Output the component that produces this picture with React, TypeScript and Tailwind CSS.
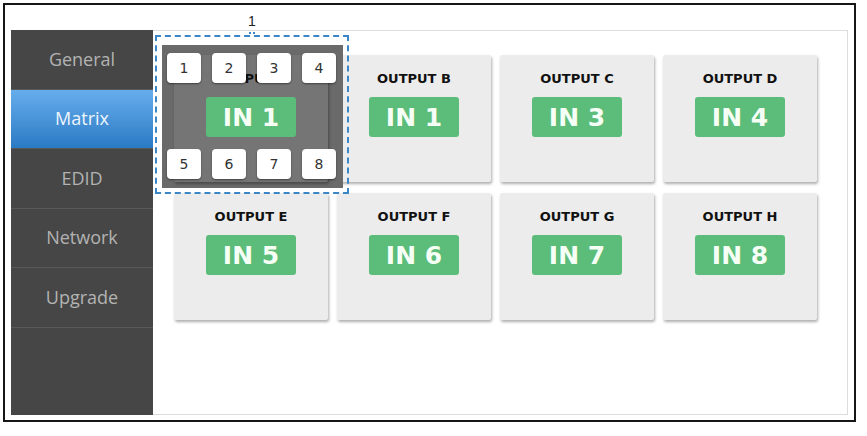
const NAV = ['General', 'Matrix', 'EDID', 'Network', 'Upgrade'];

const OUTPUTS = [
  { name: 'OUTPUT A', input: 'IN 1' },
  { name: 'OUTPUT B', input: 'IN 1' },
  { name: 'OUTPUT C', input: 'IN 3' },
  { name: 'OUTPUT D', input: 'IN 4' },
  { name: 'OUTPUT E', input: 'IN 5' },
  { name: 'OUTPUT F', input: 'IN 6' },
  { name: 'OUTPUT G', input: 'IN 7' },
  { name: 'OUTPUT H', input: 'IN 8' },
];

const verdana = "font-['DejaVu_Sans',Verdana,sans-serif]";

function InputButton({ n }: { n: number }) {
  return (
    <div
      className={`flex h-[30px] w-[34px] items-center justify-center rounded-[4px] bg-white text-[14px] text-[#333] shadow-[0_1px_2px_rgba(0,0,0,0.45)] ${verdana}`}
    >
      {n}
    </div>
  );
}

function OutputCard({ name, input, active }: { name: string; input: string; active?: boolean }) {
  return (
    <div
      className={`relative flex h-[127px] flex-col items-center rounded-[2px] pt-[16px] shadow-[1px_2px_3px_rgba(0,0,0,0.32)] ${
        active ? 'z-10 bg-[#757575]' : 'bg-[#ececec]'
      }`}
    >
      <p className={`text-[13px] leading-[16px] font-bold text-[#111] ${verdana}`}>{name}</p>
      <div
        className={`mt-[10px] flex h-[40px] w-[90px] items-center justify-center rounded-[3px] bg-[#5cbc79] text-[25px] leading-none font-bold text-[#f6fff6] ${verdana}`}
      >
        {input}
      </div>
    </div>
  );
}

export default function App() {
  return (
    <div className="h-[436px] w-[867px] bg-white pt-[3px] pl-[3px]">
      <div className="flex h-[419px] w-[853px] border-2 border-[#161616] pt-[25px] pr-[6px] pb-[5px] pl-[6px]">
        <nav className="flex w-[142px] flex-col bg-[#464646] font-['Open_Sans',sans-serif]">
          {NAV.map((item) => (
            <div
              key={item}
              className={`flex h-[59.5px] items-center justify-center border-b border-[#585858] text-[18px] ${
                item === 'Matrix'
                  ? 'bg-gradient-to-b from-[#66adec] to-[#2a7ac4] text-[#eef5fb]'
                  : 'text-[#b3b3b3]'
              }`}
            >
              {item}
            </div>
          ))}
        </nav>

        <main className="relative flex-1 border border-l-0 border-[#dcdcdc] bg-white pt-[24px] pl-[21px]">
          <div className="grid grid-cols-[repeat(4,154px)] gap-x-[9px] gap-y-[11px]">
            {OUTPUTS.map((o, i) => (
              <OutputCard key={o.name} name={o.name} input={o.input} active={i === 0} />
            ))}
          </div>

          {/* input picker popup over OUTPUT A */}
          <div className="absolute top-[4px] left-[2px] z-0 h-[159px] w-[194px] border-2 border-dashed border-[#3b86c6]">
            <span className="absolute -top-[26px] left-1/2 -translate-x-1/2 font-['Liberation_Sans',Arial,sans-serif] text-[14px] text-[#222]">
              1
            </span>
            <span className="absolute -top-[5px] left-1/2 h-[3px] w-[6px] -translate-x-1/2 border-t-2 border-dotted border-[#3b86c6]" />
            <div className="mt-[8px] ml-[5px] h-[143px] w-[181px] bg-[#6a6a6a]" />
          </div>
          <div className="absolute top-[22px] left-[14px] z-20 flex gap-[11px]">
            {[1, 2, 3, 4].map((n) => (
              <InputButton key={n} n={n} />
            ))}
          </div>
          <div className="absolute top-[118px] left-[14px] z-20 flex gap-[11px]">
            {[5, 6, 7, 8].map((n) => (
              <InputButton key={n} n={n} />
            ))}
          </div>
        </main>
      </div>
    </div>
  );
}
